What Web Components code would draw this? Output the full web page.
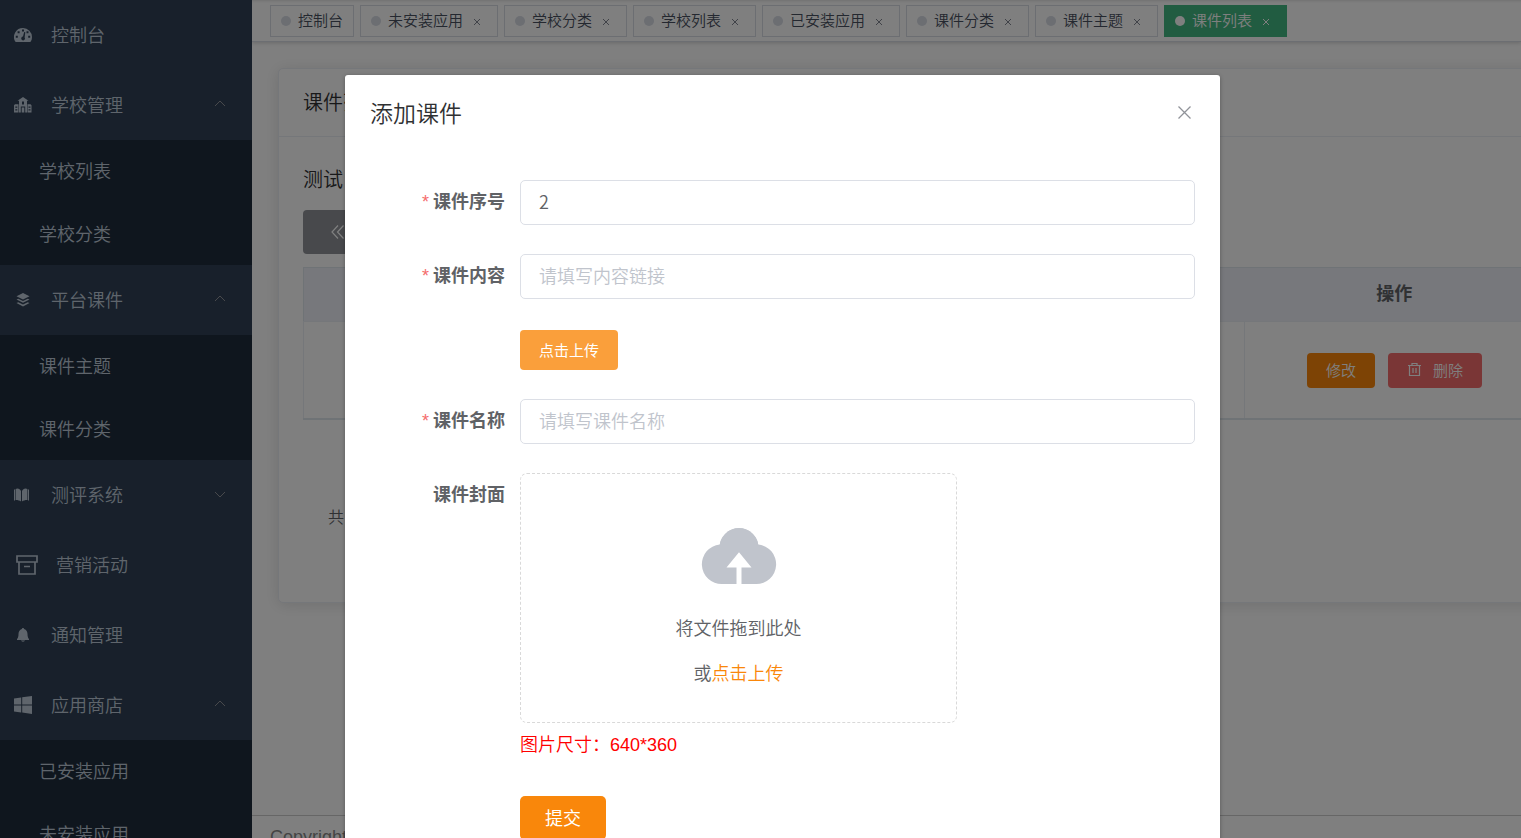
<!DOCTYPE html>
<html lang="zh-CN">
<head>
<meta charset="utf-8">
<title>课件列表</title>
<style>
html, body { margin: 0; height: 100%; overflow: hidden; background: #fff; }
body { font-family: "Liberation Sans", "Noto Sans CJK SC", sans-serif; font-size: 18px; font-weight: 350; color: #303133; }
</style>
</head>
<body>
<admin-app></admin-app>
<script>
const define = (name, html, setup) => {
  const tpl = document.createElement('template');
  tpl.innerHTML = html;
  customElements.define(name, class extends HTMLElement {
    connectedCallback() {
      if (this.shadowRoot) return;
      const root = this.attachShadow({ mode: 'open' });
      root.append(tpl.content.cloneNode(true));
      if (setup) setup(this, root);
    }
  });
};

const icons = {
  dashboard: ['0 0 18 14', '<path fill="currentColor" fill-rule="evenodd" d="M9 0a9 9 0 0 1 9 9c0 1.700-.400 3.200-1.200 4.500-.2.300-.4.500-.8.500H2c-.4 0-.6-.2-.8-.5A9 9 0 0 1 9 0zM8 1.500v2h2v-2zM3.600 3.300v2h2v-2zM12.500 3.300v2h2v-2zM1.800 7.800v2h2v-2zM14.200 7.800v2h2v-2zM10.200 4 9 8.600a1.900 1.900 0 0 0-1.200 3.200c1.600 1.600 4.200-.4 2.800-2.400L11.300 4.300z"/>'],
  school: ['0 0 18 16', '<path fill="currentColor" fill-rule="evenodd" d="M9 0l5.500 3.800H13V15.500h-1.800V9.500H6.800v6H5V3.800H3.500zM8 4.500v3h2v-3zM7.700 10.500h2.600v5H7.700zM0 8.300l1-1h3.500v8.200H0zM1.300 9.500v1.200h2V9.500zM1.300 12.300v1.200h2v-1.200zM17.500 8.300l-1-1H13.500v8.200h4zM14.500 9.500v1.200h2V9.500zM14.500 12.300v1.200h2v-1.200z"/>'],
  layers: ['0 0 14 14', '<path fill="currentColor" d="M7 0l6.500 3.200L7 6.400.5 3.200zM.5 6.500 2.300 5.700 7 8l4.700-2.300 1.800.8L7 9.800zM.5 10l1.800-.8L7 11.500l4.700-2.300 1.800.8L7 13.500z"/>'],
  book: ['0 0 18 14', '<path fill="currentColor" d="M7 3v10.500C5.800 12.500 4 12 1.600 12V1C3.500-.2 6 .5 7 3zM8 3v10.500c1.200-1 3-1.500 5.400-1.500V1C11.500-.2 9 .5 8 3zM0 1.500h1v11H0zM14 1.500h1v11h-1z"/>'],
  box: ['0 0 22 20', '<path fill="none" stroke="currentColor" stroke-width="1.700" d="M1 1h20v6H1zM3 7v12h16V7M8 11.500h6"/>'],
  bell: ['0 0 14 14', '<path fill="currentColor" d="M7 0c.7 0 1 .5 1.100 1C10.500 1.700 11.500 4 11.500 6c0 2.500.5 4 1.500 5v1H1v-1c1-1 1.500-2.500 1.500-5 0-2 1-4.300 3.400-5C6 .5 6.300 0 7 0zM5 12.500h4C8.500 14 5.500 14 5 12.500z"/>'],
  windows: ['0 0 18 18', '<path fill="currentColor" d="M0 2.500 7.200 1.400v7H0zM8.200 1.200 18 0v8.400H8.200zM0 9.400h7.200v7L0 15.400zM8.200 9.400H18V18l-9.800-1.400z"/>']
};
const svg = key => `<svg viewBox="${icons[key][0]}" aria-hidden="true">${icons[key][1]}</svg>`;

define('menu-entry', `
<style>
  :host { display: block; color: #bfcbd9; }
  a { display: flex; align-items: center; height: 70px; padding: 0 26px 0 14px; color: inherit; text-decoration: none; }
  .icon { flex: none; display: flex; justify-content: center; width: 18px; margin-right: 19px; }
  .icon svg { width: 18px; max-height: 18px; }
  :host([small]) .icon svg { width: 14px; }
  :host([wide]) .icon { width: 22px; margin: 0 18px 0 2px; }
  :host([wide]) .icon svg { width: 22px; max-height: 20px; }
  .name { flex: 1; padding-bottom: 2px; }
  .arrow { width: 12px; height: 12px; padding-bottom: 2px; display: none; color: #909399; }
  :host([state]) .arrow { display: block; }
  :host([state="closed"]) .arrow path { transform: rotate(180deg); transform-origin: center; }
  .sub { display: grid; gap: 1px; background: #1f2d3d; }
</style>
<a href="#"><span class="icon"></span><span class="name"></span>
<svg class="arrow" viewBox="0 0 12 12" aria-hidden="true"><path d="M1 8l5-5 5 5" fill="none" stroke="currentColor"/></svg></a>
<div class="sub"><slot></slot></div>`, (el, root) => {
  root.querySelector('.icon').innerHTML = svg(el.getAttribute('icon'));
  root.querySelector('.name').textContent = el.getAttribute('name');
});

define('menu-leaf', `
<style>
  :host { display: block; color: #bfcbd9; }
  a { display: flex; align-items: center; box-sizing: border-box; height: 62px; padding: 0 0 2px 39px; color: inherit; text-decoration: none; }
</style><a href="#"><slot></slot></a>`);

define('side-menu', `
<style>
  :host { display: block; flex: none; width: 252px; overflow: hidden; background: #304156; }
</style>
<nav>
  <menu-entry icon="dashboard" name="控制台"></menu-entry>
  <menu-entry icon="school" name="学校管理" state="open"><menu-leaf>学校列表</menu-leaf><menu-leaf>学校分类</menu-leaf></menu-entry>
  <menu-entry icon="layers" small name="平台课件" state="open"><menu-leaf>课件主题</menu-leaf><menu-leaf>课件分类</menu-leaf></menu-entry>
  <menu-entry icon="book" name="测评系统" state="closed"></menu-entry>
  <menu-entry icon="box" wide name="营销活动"></menu-entry>
  <menu-entry icon="bell" small name="通知管理"></menu-entry>
  <menu-entry icon="windows" name="应用商店" state="open"><menu-leaf>已安装应用</menu-leaf><menu-leaf>未安装应用</menu-leaf></menu-entry>
</nav>`);

define('tab-chip', `
<style>
  :host { display: flex; align-items: center; box-sizing: border-box; height: 32px; padding: 0 10px; border: 1px solid #d8dce5; background: #fff; color: #495060; font-size: 15px; line-height: 30px; white-space: nowrap; }
  :host([active]) { background: #42b983; border-color: #42b983; color: #fff; }
  a { display: flex; align-items: center; gap: 7px; color: inherit; text-decoration: none; }
  a::before { content: ""; width: 10px; height: 10px; border-radius: 50%; background: #d8dce5; }
  :host([active]) a::before { background: #fff; }
  button { display: flex; align-items: center; justify-content: center; width: 20px; height: 20px; margin: 2px 0 0 4px; padding: 0; border: 0; background: none; color: #808590; }
  :host([active]) button { color: #fff; }
  :host([fixed]) button { display: none; }
  svg { width: 6px; height: 6px; }
</style>
<a href="#"><span><slot></slot></span></a><button aria-label="关闭"><svg viewBox="0 0 6 6"><path d="M0 0l6 6M6 0L0 6" stroke="currentColor"/></svg></button>`);

define('tab-strip', `
<style>
  :host { display: flex; gap: 6px; flex: none; box-sizing: border-box; height: 42px; padding: 5px 18px; border-bottom: 1px solid #d8dce5; background: #fff; box-shadow: 0 1px 4px rgba(0,0,0,.18), inset 0 3px 3px -2px rgba(0,0,0,.12); }
</style>
<tab-chip fixed>控制台</tab-chip><tab-chip>未安装应用</tab-chip><tab-chip>学校分类</tab-chip><tab-chip>学校列表</tab-chip><tab-chip>已安装应用</tab-chip><tab-chip>课件分类</tab-chip><tab-chip>课件主题</tab-chip><tab-chip active>课件列表</tab-chip>`);

define('course-card', `
<style>
  :host { display: block; box-sizing: border-box; min-height: 535px; margin: 26px -49px 0 26px; border: 1px solid #ebeef5; border-radius: 5px; background: #fff; box-shadow: 0 2px 15px rgba(0,0,0,.12); }
  h1 { margin: 0; padding: 1px 24px 0; border-bottom: 1px solid #ebeef5; font-size: 20px; font-weight: 350; line-height: 66px; }
  .body { padding: 28px 24px; }
  h2 { margin: 0; font-size: 20px; font-weight: 350; line-height: 30px; }
  button { font: inherit; font-size: 15px; color: #fff; border: 0; border-radius: 4px; }
  .back { display: flex; align-items: center; width: 112px; height: 44px; margin: 15px 0 13px; padding: 0 28px; background: #909399; }
  .back svg { width: 14px; height: 14px; }
  table { width: 100%; border-collapse: collapse; table-layout: fixed; border: 1px solid #dfe6ec; }
  th { height: 52px; padding: 0 0 1px; background: #eef1f9; color: #606266; font-weight: 700; line-height: 26px; }
  td { height: 96px; padding: 0; border: 1px solid #ebeef5; border-bottom: 2px solid #dfe6ec; }
  col.ops { width: 300px; }
  .acts { display: flex; justify-content: center; gap: 13px; }
  .acts button { display: flex; align-items: center; gap: 11px; height: 35px; padding: 0 19px 1px; background: #fa870a; }
  .acts .del { background: #f56c6c; }
  .acts svg { width: 15px; height: 15px; }
  .pager { padding: 86px 25px 0; font-size: 16px; line-height: 24px; color: #606266; }
</style>
<h1>课件列表</h1>
<div class="body">
  <h2>测试</h2>
  <button class="back" aria-label="返回"><svg viewBox="0 0 14 14"><path d="M7 .5L1 7l6 6.500M12.500 .5L6.500 7l6 6.500" fill="none" stroke="currentColor" stroke-width="1.200"/></svg></button>
  <table>
    <colgroup><col><col class="ops"></colgroup>
    <thead><tr><th></th><th>操作</th></tr></thead>
    <tbody><tr><td></td><td><div class="acts"><button>修改</button><button class="del"><svg viewBox="0 0 15 15"><path d="M1 3.500h13M5 3V1.500h5V3M2.500 3.500v10h10v-10M6 6v5M9 6v5" fill="none" stroke="currentColor" stroke-width="1.200"/></svg>删除</button></div></td></tr></tbody>
  </table>
  <div class="pager">共</div>
</div>`);

define('form-row', `
<style>
  :host { display: flex; align-items: flex-start; }
  label, .label { flex: none; box-sizing: border-box; width: 150px; padding-right: 15px; text-align: right; font-weight: 700; line-height: 45px; color: #606266; }
  :host([required]) label::before { content: "*"; margin-right: 4px; color: #f56c6c; font-weight: 400; }
  .content { flex: 1; min-width: 0; }
  input { display: block; box-sizing: border-box; width: 100%; height: 45px; padding: 0 18px 3px; border: 1px solid #dcdfe6; border-radius: 5px; background: #fff; font: inherit; font-family: "Noto Sans CJK SC", sans-serif; color: #606266; outline: 0; }
  input::placeholder { color: #c0c4cc; opacity: 1; }
</style>
<label for="field"></label><div class="content"><input id="field"><slot></slot></div>`, (el, root) => {
  const label = root.querySelector('label'), input = root.querySelector('input');
  label.textContent = el.getAttribute('label') || '';
  if (el.hasAttribute('custom')) {
    const text = document.createElement('span');
    text.className = 'label';
    text.textContent = label.textContent;
    label.replaceWith(text);
    input.remove();
  } else {
    input.placeholder = el.getAttribute('placeholder') || '';
    input.value = el.getAttribute('value') || '';
  }
});

define('cover-upload', `
<style>
  :host { display: block; }
  .drop { display: flex; flex-direction: column; align-items: center; box-sizing: border-box; max-width: 437px; height: 250px; padding-top: 54px; border: 1px dashed #d9d9d9; border-radius: 7px; color: #606266; line-height: 45px; }
  svg { width: 74px; height: 56px; margin-bottom: 23px; overflow: visible; color: #c0c4cc; }
  a { color: #fa870a; text-decoration: none; }
  .hint { line-height: 44px; color: #f00; }
</style>
<div class="drop">
  <svg viewBox="0 0 74 56" aria-hidden="true"><path fill="currentColor" d="M20 56A19.800 19.800 0 0 1 17.700 16.500A19.600 19.600 0 0 1 56.300 16.500A19.800 19.800 0 0 1 54 56H39.500V39.500H49.500L37 24.300L24.500 39.500H34.500V56Z"/><circle cx="37" cy="19.500" r="19.500" fill="currentColor" clip-path="inset(0 0 22px 0)"/></svg>
  <div>将文件拖到此处</div><div>或<a href="#">点击上传</a></div>
</div>
<div class="hint">图片尺寸：640*360</div>`);

define('solid-button', `
<style>
  :host { display: block; }
  button { display: block; height: 44px; padding: 0 25px 2px; border: 0; border-radius: 5px; background: #f9870b; color: #fff; font: inherit; font-weight: 400; }
  :host([soft]) { margin-top: 31px; }
  :host([soft]) button { height: 40px; padding: 0 19px 2px; border-radius: 4px; background: #fa9f3b; font-size: 15px; }
</style><button type="button"><slot></slot></button>`);

define('modal-dialog', `
<style>
  :host { display: block; position: absolute; inset: 0 -44px 0 0; overflow: hidden; background: rgba(0,0,0,.5); }
  section { box-sizing: border-box; width: 875px; margin: 75px auto; padding: 21px 25px 38px; border-radius: 3px; background: #fff; box-shadow: 0 1px 4px rgba(0,0,0,.3); }
  header { display: flex; justify-content: space-between; margin-bottom: 48px; }
  h2 { margin: 0; font-size: 23px; font-weight: 350; line-height: 36px; }
  .close { display: flex; align-items: center; height: 32px; padding: 0 4px; border: 0; background: none; color: #909399; }
  .close svg { width: 13px; height: 13px; }
  form { display: flex; flex-direction: column; gap: 29px; }
</style>
<section role="dialog" aria-labelledby="title">
  <header><h2 id="title">添加课件</h2><button class="close" aria-label="关闭"><svg viewBox="0 0 13 13"><path d="M.5 .5l12 12M12.500 .5l-12 12" stroke="currentColor" stroke-width="1.300"/></svg></button></header>
  <form>
    <form-row required label="课件序号" value="2"></form-row>
    <form-row required label="课件内容" placeholder="请填写内容链接"><solid-button soft>点击上传</solid-button></form-row>
    <form-row required label="课件名称" placeholder="请填写课件名称"></form-row>
    <form-row custom label="课件封面"><cover-upload></cover-upload></form-row>
    <form-row custom><solid-button>提交</solid-button></form-row>
  </form>
</section>`);

define('admin-app', `
<style>
  :host { display: flex; position: relative; height: 100vh; overflow: hidden; }
  main { display: flex; flex: 1; flex-direction: column; min-width: 0; overflow: hidden; }
  .page { flex: 1; min-height: 0; }
  footer { flex: none; box-sizing: border-box; height: 23px; padding: 0 18px; border-top: 1px solid #ccc; font-size: 18px; font-weight: 400; line-height: 42px; color: #888; }
</style>
<side-menu></side-menu>
<main><tab-strip></tab-strip><div class="page"><course-card></course-card></div><footer>Copyright</footer></main>
<modal-dialog></modal-dialog>`);
</script>
</body>
</html>
